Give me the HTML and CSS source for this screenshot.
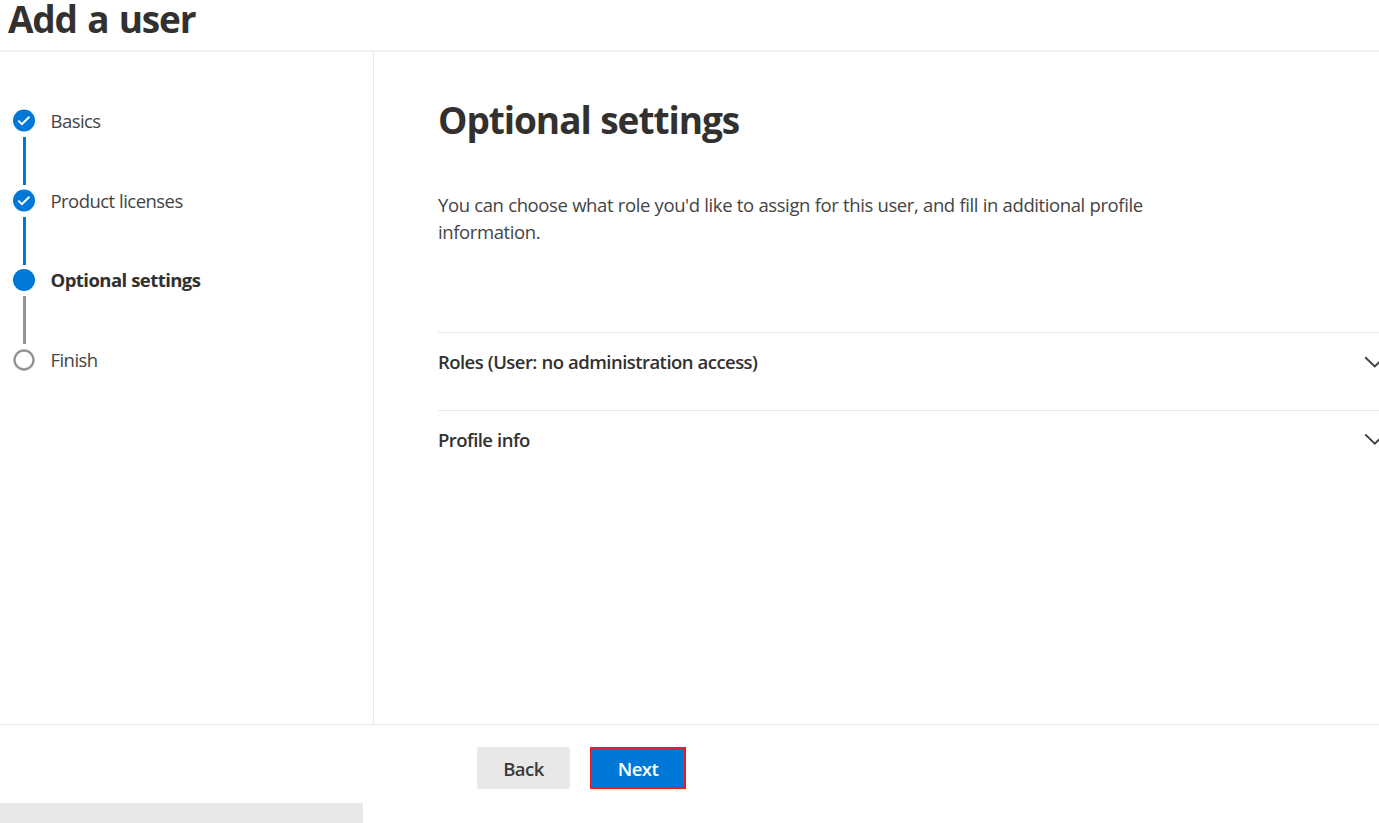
FILE: index.html
```
<!DOCTYPE html>
<html lang="en">
<head>
<meta charset="utf-8">
<title>Add a user</title>
<link rel="stylesheet" href="styles.css">
</head>
<body>
<header class="header"><h1 class="title">Add a user</h1></header>
<div class="body">
  <nav class="steps">
    <div class="step">
      <svg class="dot" viewBox="0 0 22 22"><circle cx="11" cy="10.5" r="11" fill="#0078d7"/><path d="M5.3 10.6l3.6 3.5 7.5-7.4" fill="none" stroke="#fff" stroke-width="2"/></svg>
      <span class="label">Basics</span>
      <i class="line"></i>
    </div>
    <div class="step">
      <svg class="dot" viewBox="0 0 22 22"><circle cx="11" cy="10.5" r="11" fill="#0078d7"/><path d="M5.3 10.6l3.6 3.5 7.5-7.4" fill="none" stroke="#fff" stroke-width="2"/></svg>
      <span class="label">Product licenses</span>
      <i class="line"></i>
    </div>
    <div class="step">
      <svg class="dot" viewBox="0 0 22 22"><circle cx="11" cy="11" r="11" fill="#0078d7"/></svg>
      <span class="label current">Optional settings</span>
      <i class="line pending"></i>
    </div>
    <div class="step">
      <svg class="dot" viewBox="0 0 22 22"><circle cx="11" cy="11" r="9.5" fill="#fff" stroke="#959595" stroke-width="2.4"/></svg>
      <span class="label">Finish</span>
    </div>
  </nav>
  <main class="main">
    <h2 class="heading">Optional settings</h2>
    <p class="intro">You can choose what role you'd like to assign for this user, and fill in additional profile<br>information.</p>
    <div class="row"><span class="rowtext">Roles (User: no administration access)</span>
      <svg class="chevron" viewBox="0 0 22 14"><path d="M1.2 1.2l9.6 9.3 9.6-9.3" fill="none" stroke="#404040" stroke-width="1.9"/></svg></div>
    <div class="row"><span class="rowtext">Profile info</span>
      <svg class="chevron" viewBox="0 0 22 14"><path d="M1.2 .4l9.6 9.3 9.6-9.3" fill="none" stroke="#404040" stroke-width="1.9"/></svg></div>
  </main>
</div>
<footer class="footer">
  <button class="btn back">Back</button>
  <button class="btn next">Next</button>
</footer>
<div class="strip"></div>
</body>
</html>
```
FILE: styles.css
```
* { box-sizing: border-box; }
body { margin: 0; height: 823px; overflow: hidden; display: flex; flex-direction: column; background: #fff; color: #323130; font-family: "Open Sans", "Noto Sans", sans-serif; font-size: 18.5px; letter-spacing: -0.4px; word-spacing: 0.25px; }
.header { height: 52px; border-bottom: 2px solid #f1f1f1; padding-left: 8px; flex: none; }
.title { margin: 0; font-size: 37px; line-height: 38px; height: 50px; font-weight: 700; letter-spacing: -1.2px; word-spacing: 2px; }
.body { display: flex; height: 672px; flex: none; }
.steps { width: 374px; flex: none; border-right: 1px solid #e8e8e8; padding: 58px 0 0 13px; }
.step { display: grid; grid-template-columns: 22px 1fr; column-gap: 15.5px; grid-template-rows: 22px 57.7px; align-items: center; }
.dot { width: 22px; height: 22px; display: block; overflow: visible; }
.label { line-height: 22px; color: #444; letter-spacing: -0.55px; }
.current { font-weight: 700; color: #323130; }
.line { width: 3px; height: 48px; background: #0078d7; justify-self: center; }
.pending { background: #959595; }
.main { flex: none; width: 1005px; padding: 44px 0 0 64px; }
.heading { margin: 0; font-size: 37px; line-height: 48px; font-weight: 700; letter-spacing: -1.05px; word-spacing: 1px; }
.intro { margin: 47px 0 0; line-height: 27px; height: 141px; color: #444; }
.row { height: 78px; border-top: 1px solid #e8e8e8; display: flex; justify-content: space-between; padding-top: 17px; font-weight: 600; line-height: 24px; letter-spacing: -0.55px; word-spacing: 0.4px; }
.chevron { width: 22px; height: 14px; margin: 6px -7px 0 0; flex: none; }
.footer { height: 79px; flex: none; border-top: 1px solid #e8e8e8; display: flex; gap: 20px; padding: 22px 0 0 477px; }
.btn { font: 600 18.5px/24px "Open Sans", "Noto Sans", sans-serif; letter-spacing: -0.5px; color: #3b3a39; border: 0; height: 42px; width: 93px; padding: 2px 0 0; border-radius: 2px; background: #e8e8e8; }
.next { width: 96px; color: #fff; background: #0078d7; border: 2px solid #ed1c24; border-radius: 0; }
.strip { width: 363px; height: 20px; background: #e8e8e8; }
```
